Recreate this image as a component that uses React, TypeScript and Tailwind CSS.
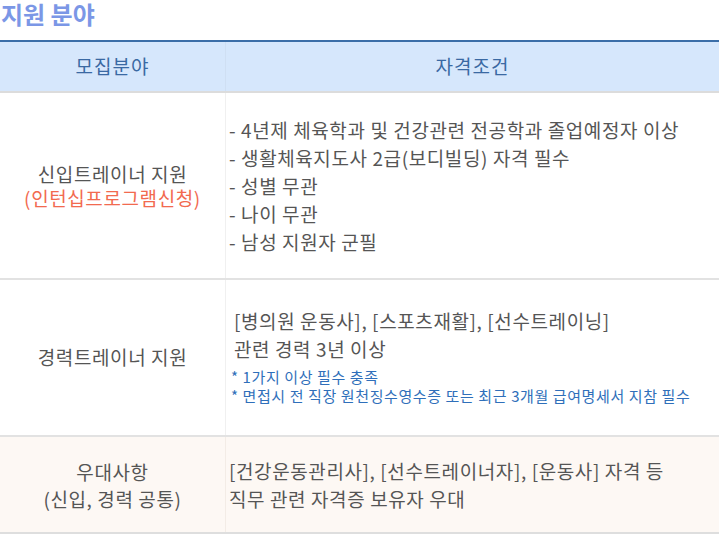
import React from "react";

const font = { fontFamily: '"Noto Sans CJK KR", "Noto Sans", sans-serif' };

export default function App() {
  return (
    <div className="w-[721px] h-[535px] bg-white overflow-hidden" style={font}>
      <div className="h-[40px] pl-[1px] pt-[1px] text-[24px] font-bold leading-[26px] text-[#7b97e6]">지원 분야</div>
      <div className="w-[719px] border-t-2 border-[#3b6ea8]">
        <div className="grid grid-cols-[226px_493px] h-[51px] bg-[#d6e7fc] border-b-2 border-[#dcdcdc] text-[19px] tracking-[1px] text-[#3a69a3]">
          <div className="flex items-center justify-center border-r border-[#cfdff3]">모집분야</div>
          <div className="flex items-center justify-center">자격조건</div>
        </div>
        <div className="grid grid-cols-[226px_493px] h-[187px] border-b-2 border-[#e2e2e2] text-[19px] tracking-[0.6px] text-[#555]">
          <div className="flex flex-col items-center justify-center leading-[24px] border-r border-[#f0f0f0] pt-[1px]">
            <div>신입트레이너 지원</div>
            <div className="text-[#f26a4f]">(인턴십프로그램신청)</div>
          </div>
          <div className="flex flex-col justify-center pl-[3px] leading-[28px] pt-[1px]">
            <div>- 4년제 체육학과 및 건강관련 전공학과 졸업예정자 이상</div>
            <div>- 생활체육지도사 2급(보디빌딩) 자격 필수</div>
            <div>- 성별 무관</div>
            <div>- 나이 무관</div>
            <div>- 남성 지원자 군필</div>
          </div>
        </div>
        <div className="grid grid-cols-[226px_493px] h-[157px] border-b-2 border-[#e2e2e2] text-[19px] tracking-[0.6px] text-[#555]">
          <div className="flex items-center justify-center border-r border-[#f0f0f0]">경력트레이너 지원</div>
          <div className="flex flex-col justify-center pl-[8px] pb-[3px]">
            <div className="leading-[28px]">[병의원 운동사], [스포츠재활], [선수트레이닝]</div>
            <div className="leading-[28px]">관련 경력 3년 이상</div>
            <div className="text-[15px] tracking-[0.6px] leading-[19px] text-[#2f6fba] mt-[4px] -ml-[3px]">
              <div>* 1가지 이상 필수 충족</div>
              <div>* 면접시 전 직장 원천징수영수증 또는 최근 3개월 급여명세서 지참 필수</div>
            </div>
          </div>
        </div>
        <div className="grid grid-cols-[226px_493px] h-[97px] bg-[#fdf8f4] border-b-2 border-[#dedede] text-[19px] tracking-[0.6px] text-[#555]">
          <div className="flex flex-col items-center justify-center leading-[27px] border-r border-[#f3ece6]">
            <div>우대사항</div>
            <div>(신입, 경력 공통)</div>
          </div>
          <div className="flex flex-col justify-center pl-[3px] leading-[28px]">
            <div>[건강운동관리사], [선수트레이너자], [운동사] 자격 등</div>
            <div>직무 관련 자격증 보유자 우대</div>
          </div>
        </div>
      </div>
    </div>
  );
}
